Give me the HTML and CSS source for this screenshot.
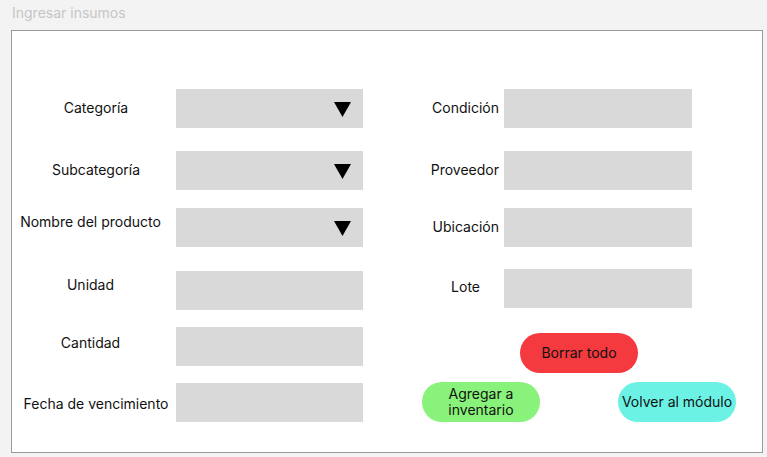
FILE: index.html
```html
<!DOCTYPE html>
<html lang="es">
<head>
<meta charset="utf-8">
<title>Ingresar insumos</title>
<link rel="stylesheet" href="styles.css">
</head>
<body>
<div class="title">Ingresar insumos</div>
<div class="frame">
  <div class="form">
    <div class="lbl shr">Categoría</div>
    <div class="field select"><svg class="tri" width="17" height="15" viewBox="0 0 17 15"><polygon points="0,0 17,0 8.5,15" fill="#000"/></svg></div>
    <div class="lbl lbl-r">Condición</div>
    <div class="field field-r"></div>
    <div></div>

    <div class="lbl shr">Subcategoría</div>
    <div class="field select"><svg class="tri" width="17" height="15" viewBox="0 0 17 15"><polygon points="0,0 17,0 8.5,15" fill="#000"/></svg></div>
    <div class="lbl lbl-r">Proveedor</div>
    <div class="field field-r"></div>
    <div></div>

    <div class="lbl up5 shl">Nombre del producto</div>
    <div class="field select"><svg class="tri" width="17" height="15" viewBox="0 0 17 15"><polygon points="0,0 17,0 8.5,15" fill="#000"/></svg></div>
    <div class="lbl lbl-r">Ubicación</div>
    <div class="field field-r"></div>
    <div></div>

    <div class="lbl up5 shl">Unidad</div>
    <div class="field"></div>
    <div class="lbl lbl-r lote">Lote</div>
    <div class="field field-r raise2"></div>
    <div></div>

    <div class="lbl up3 shl">Cantidad</div>
    <div class="field"></div>
    <div class="actions actions-top">
      <button class="btn btn-red">Borrar todo</button>
    </div>

    <div class="lbl down2 shr">Fecha de vencimiento</div>
    <div class="field"></div>
    <div class="actions actions-bottom">
      <button class="btn btn-green">Agregar a<br>inventario</button>
      <button class="btn btn-cyan">Volver al módulo</button>
    </div>
  </div>
</div>
</body>
</html>
```

FILE: styles.css
```css
* { box-sizing: border-box; }

html, body {
  margin: 0;
  padding: 0;
  background: #f3f3f3;
  font-family: Inter, "Noto Sans", "Liberation Sans", sans-serif;
  font-size: 14px;
  color: #111;
}

.title {
  padding: 4px 0 0 12px;
  height: 21px;
  line-height: 17px;
  color: #c6c6c6;
  font-size: 14px;
}

.frame {
  margin: 9px 0 0 11px;
  width: 752px;
  height: 423px;
  background: #fff;
  border: 1px solid #9a9a9a;
}

.form {
  display: grid;
  grid-template-columns: 164px 187px 141px 188px 1fr;
  grid-template-rows: 62px 57px 63px 56px 56px 39px;
  padding-top: 58px;
}

.lbl {
  height: 39px;
  display: flex;
  align-items: center;
  justify-content: center;
  line-height: 17px;
  white-space: nowrap;
  padding-bottom: 3px;
}

.shr { padding-left: 4px; }
.shl { padding-right: 7px; }

.lbl-r {
  justify-content: flex-end;
  padding-right: 5px;
}

.lote {
  justify-content: flex-end;
  padding-right: 24px;
  padding-bottom: 8px;
}

.up5 { padding-bottom: 13px; }
.up3 { padding-bottom: 9px; }
.down2 { padding-top: 1px; padding-bottom: 0; }

.field {
  height: 39px;
  background: #d9d9d9;
}

.raise2 { margin-top: -2px; }

.select {
  display: flex;
  align-items: center;
  justify-content: flex-end;
  padding-right: 12px;
}

.tri { display: block; margin-top: 1px; }

.actions {
  grid-column: 3 / -1;
  display: flex;
  align-items: flex-start;
}

.actions-top {
  padding: 6px 0 0 157px;
}

.actions-bottom {
  padding-left: 59px;
  gap: 78px;
  margin-top: -1px;
}

.btn {
  width: 118px;
  height: 40px;
  border: none;
  border-radius: 20px;
  font-family: inherit;
  font-size: 14px;
  line-height: 16px;
  color: #111;
  padding: 0;
  display: flex;
  align-items: center;
  justify-content: center;
  text-align: center;
  white-space: nowrap;
}

.btn-red { background: #f43a3f; }
.btn-green { background: #88f27a; }
.btn-cyan { background: #6bf2e4; }
```
